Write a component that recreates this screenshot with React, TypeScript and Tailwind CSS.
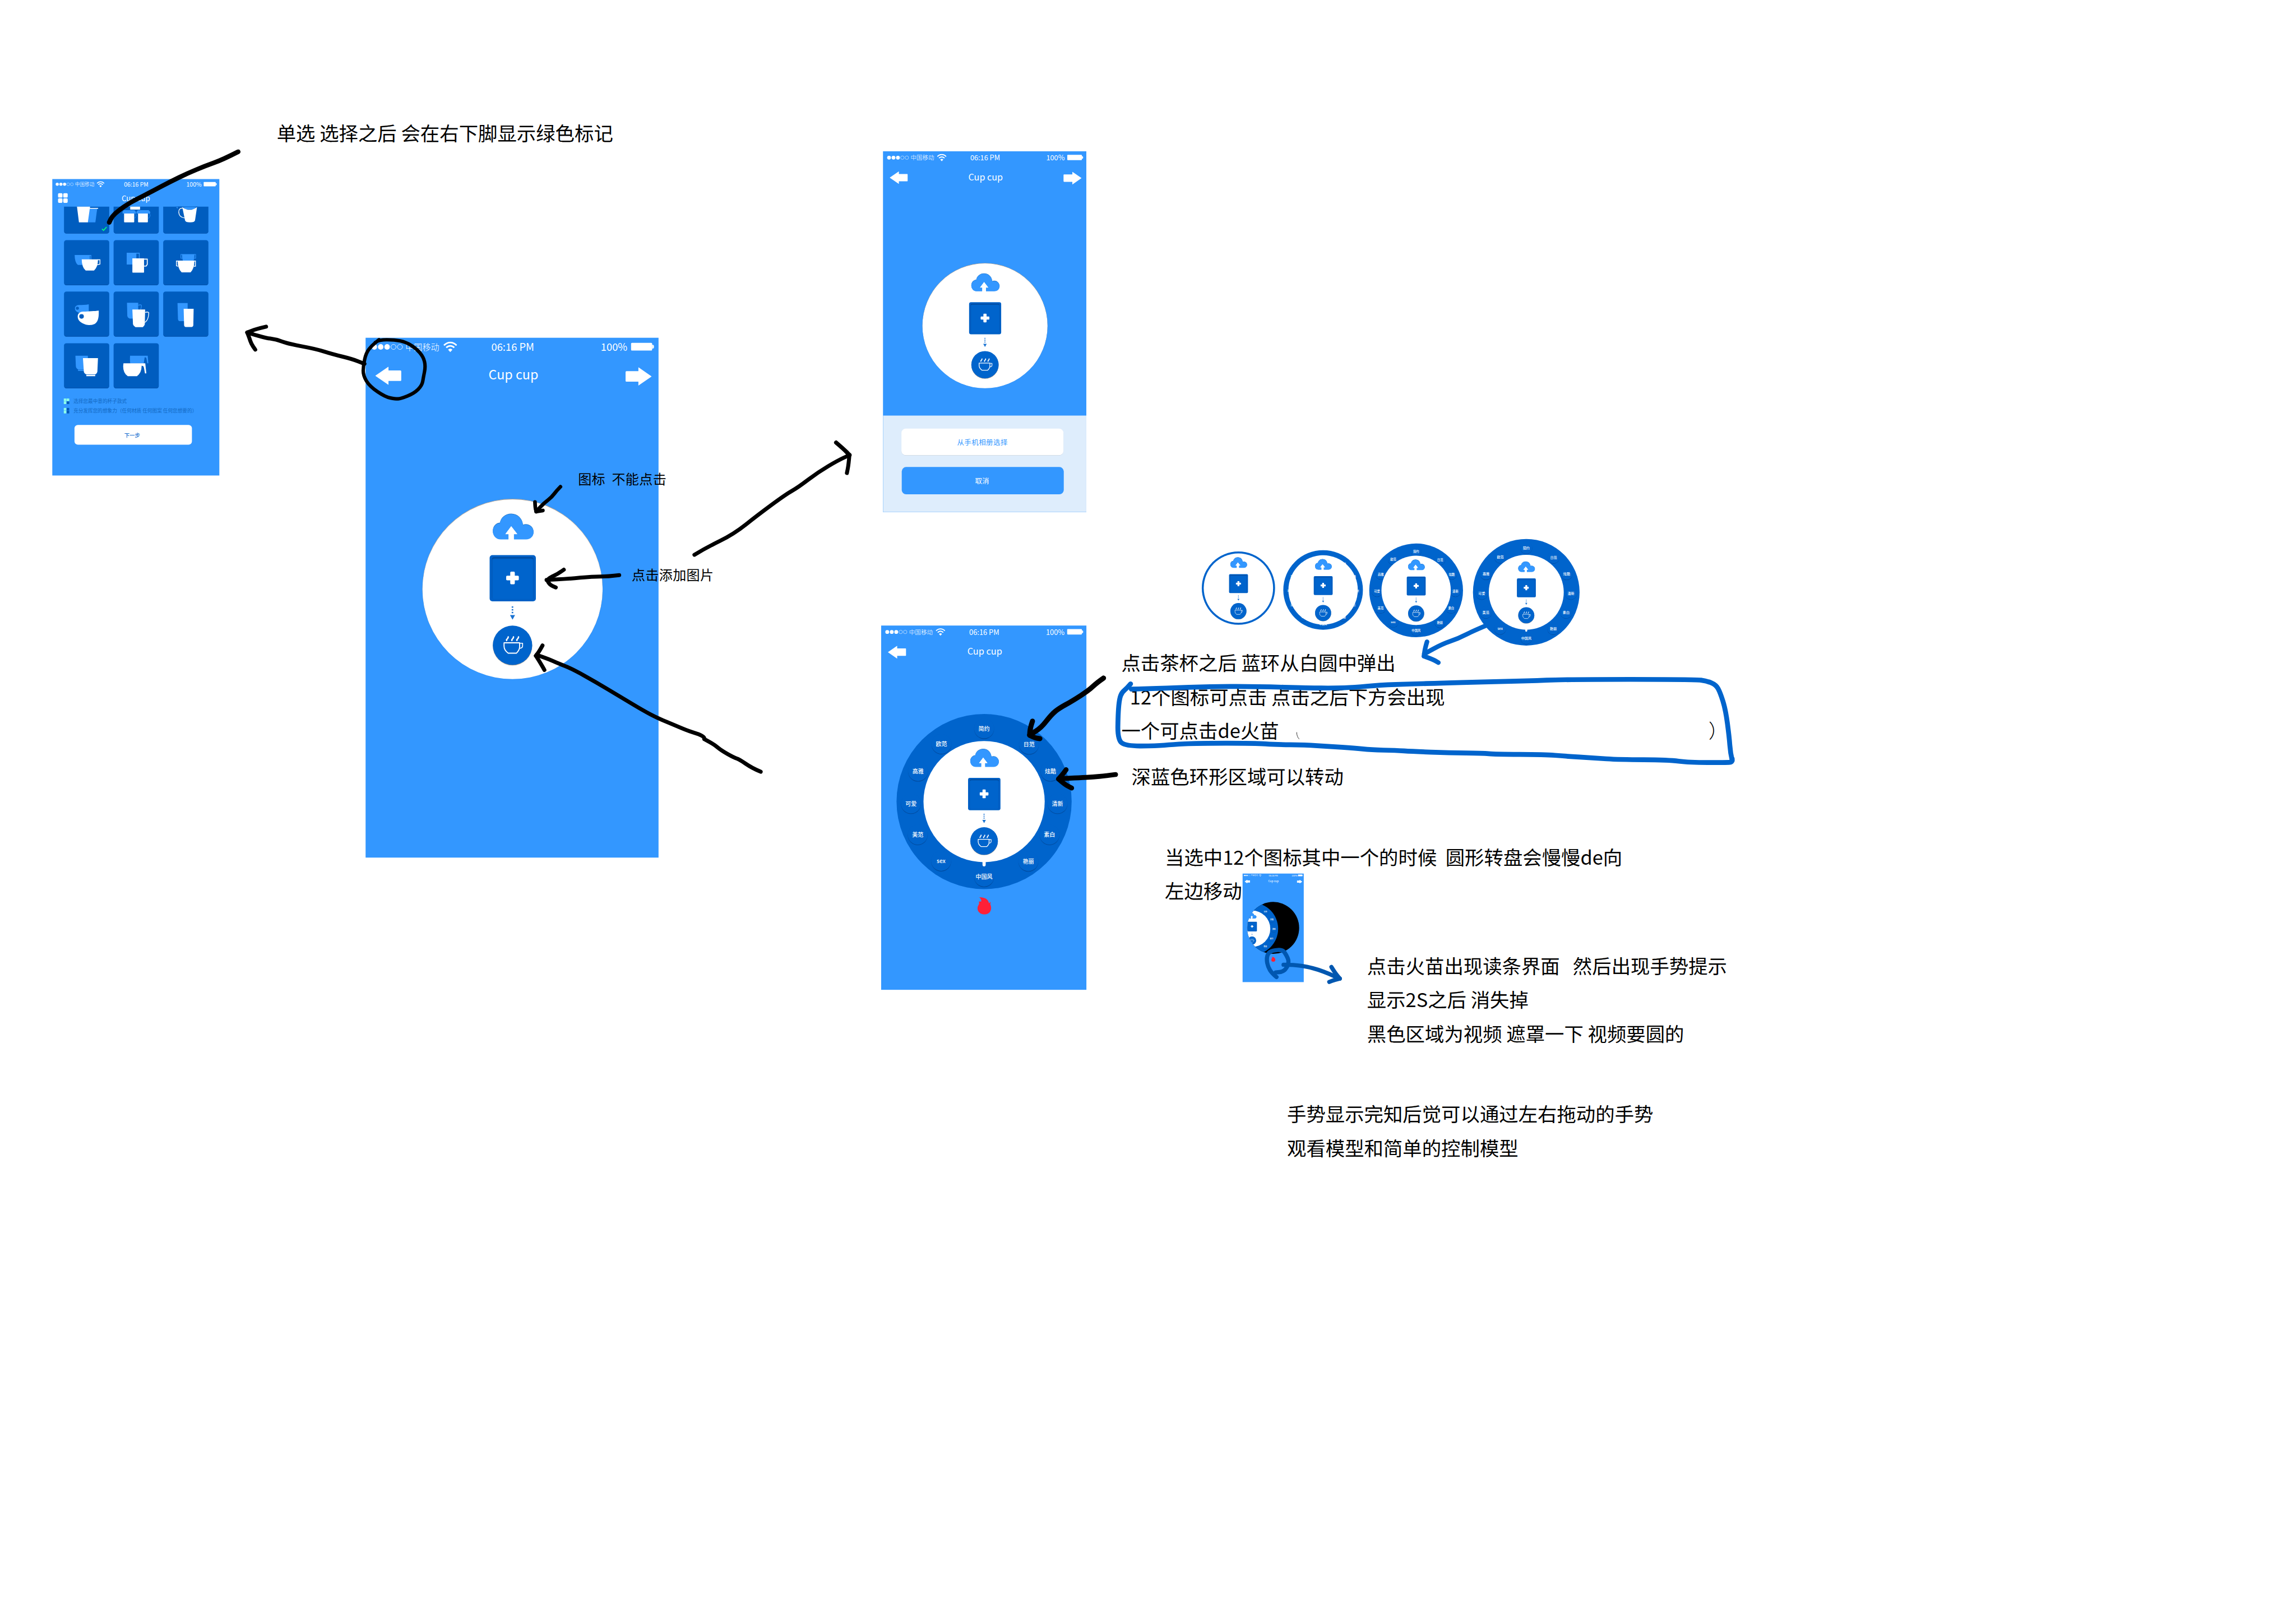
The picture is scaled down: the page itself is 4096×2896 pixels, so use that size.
import React from "react";

type Pt = [number, number];

/* ---------- icons ---------- */

function CloudUpload() {
  const d =
    "M36 115C14 115 0 98 0 78C0 58 14 42 32 41C36 18 56 0 83 0C112 0 134 22 136 50C160 42 184 58 184 82C184 101 170 115 150 115H95V91H111L83 55L56 91H71V115Z";
  return (
    <svg viewBox="0 -2 184 117" className="ml-[3px] h-[57px] w-[89px] shrink-0 overflow-visible">
      <path d={d} fill="#1f6fbe" transform="translate(0 -2)" />
      <path d={d} fill="#3397ff" />
      <path d="M95 116V91H111L83 55L56 91H71V116Z" fill="#fff" />
    </svg>
  );
}

function DashedArrow() {
  return (
    <svg viewBox="0 0 12 29" className="mt-[11px] h-[29px] w-3 shrink-0" fill="#1a73d2">
      <rect x="4.2" y="0" width="3.4" height="3" />
      <rect x="4.2" y="6" width="3.4" height="3" />
      <rect x="4.2" y="12" width="3.4" height="3" />
      <path d="M0.5 19H11.5L6 29Z" />
    </svg>
  );
}

function CupIcon() {
  return (
    <svg viewBox="-21 -20 46 42" className="h-[42px] w-[46px]" fill="none" stroke="#fff" strokeWidth="2.3" strokeLinejoin="round">
      <path d="M-18.5 -4.3H15.5V4C15.5 12 11 16 8.5 18.3H-9.5C-14 15 -18.5 11 -18.5 3Z" />
      <path d="M15.5 -3.5H22V2C22 5.5 20 7.6 15 7.6" strokeWidth="2" />
      <path d="M-10 -18.5C-8 -15.5 -10.5 -14 -12.5 -12C-14 -10.5 -13 -9.5 -12 -8.5M1.5 -18.5C3.500 -15.5 1 -14 -1 -12C-2.500 -10.5 -1.500 -9.500 -0.500 -8.500M12.500 -18.5C14.500 -15.5 12 -14 10 -12C8.500 -10.500 9.500 -9.500 10.500 -8.500" strokeWidth="3" />
    </svg>
  );
}

function Wifi() {
  return (
    <svg viewBox="0 0 30 24" className="h-6 w-[30px]" fill="none" stroke="#fff" strokeWidth="3.4">
      <path d="M1.200 8.600C9 0.200 21 0.200 28.800 8.600" />
      <path d="M6.300 13.600C11.300 8.300 18.700 8.300 23.700 13.600" />
      <path d="M10.300 18.200C13 15.300 17 15.300 19.700 18.200L15 23.400Z" fill="#fff" stroke="none" />
    </svg>
  );
}

function BlockArrow({ flip }: { flip?: boolean }) {
  return (
    <svg viewBox="0 0 57 40" className={flip ? "h-10 w-[57px] translate-y-[1.5px] -scale-x-100" : "h-10 w-[57px]"} fill="#fff">
      <path d="M0 20L29 0V8.500H55Q57 8.500 57 10.500V29.500Q57 31.500 55 31.500H29V40Z" />
    </svg>
  );
}

function Flame({ className }: { className: string }) {
  return (
    <svg viewBox="0 0 91 113" className={className} fill="#ff2037">
      <path d="M12 1C45 0 70 12 75 39L88 32C84 40 82 46 86 52C98 85 78 113 46 113C10 113 -10 80 5 55C10 46 14 38 8 29L25 28C26 16 20 8 12 1Z" />
    </svg>
  );
}

/* ---------- phone chrome ---------- */

function StatusBar() {
  return (
    <div className="grid h-[39px] shrink-0 grid-cols-[1fr_auto_1fr] items-center pr-[10px] pl-[13px] text-white">
      <div className="flex items-center">
        <div className="flex gap-[2px]">
          {[0, 1, 2].map((i) => (
            <span key={i} className="size-3 rounded-full bg-white" />
          ))}
          {[3, 4].map((i) => (
            <span key={i} className="size-3 rounded-full border-[1.300px] border-white" />
          ))}
        </div>
        <span className="ml-[6px] text-[18.500px] leading-none font-light whitespace-nowrap">中国移动</span>
        <span className="ml-[9px]">
          <Wifi />
        </span>
      </div>
      <span className="text-[22.500px] leading-none whitespace-nowrap">06:16 PM</span>
      <div className="flex items-center justify-end">
        <span className="text-[22.500px] leading-none">100%</span>
        <span className="ml-2 h-[17px] w-[46px] rounded-[2px] bg-white" />
        <span className="h-[9px] w-[4px] rounded-r-full bg-white" />
      </div>
    </div>
  );
}

function NavBar({ next }: { next?: boolean }) {
  return (
    <div className="grid h-[87px] shrink-0 grid-cols-[1fr_auto_1fr] items-center pr-[15px] pl-[21px] text-white">
      <BlockArrow />
      <span className="mb-[6px] text-[28.500px] leading-none whitespace-nowrap">Cup cup</span>
      <span className="flex justify-end">{next && <BlockArrow flip />}</span>
    </div>
  );
}

function Phone({ className, children }: { className: string; children: React.ReactNode }) {
  return (
    <section className={"absolute flex h-[1136px] w-[640px] origin-top-left flex-col overflow-hidden bg-[#3397ff] " + className}>
      {children}
    </section>
  );
}

/* ---------- dial ---------- */

function Core({ className }: { className: string }) {
  return (
    <div className={"relative flex flex-col items-center justify-center rounded-full bg-white [grid-area:1/1] " + className}>
      <CloudUpload />
      <div className="mt-[34px] size-[101px] shrink-0 rounded-[6px] bg-[#0060c6] p-[5px]">
        <div className="flex h-full items-center justify-center rounded-[5px] bg-[#0064cc] shadow-[inset_0_2px_2px_rgba(0,50,110,0.7)]">
          <svg viewBox="0 0 28 28" className="size-7" fill="#fff">
            <rect x="9" y="0" width="10" height="28" rx="2.500" />
            <rect x="0" y="9" width="28" height="10" rx="2.500" />
          </svg>
        </div>
      </div>
      <DashedArrow />
      <div className="mt-[13px] flex size-[86px] shrink-0 items-center justify-center rounded-full bg-[#0064cc] pl-1 shadow-[0_1px_1px_rgba(80,50,20,0.5)]">
        <CupIcon />
      </div>
    </div>
  );
}

const STYLES = [
  { name: "简约", at: "left-[273px] top-[45px]" },
  { name: "日范", at: "left-[413px] top-[94px]" },
  { name: "炫酷", at: "left-[480px] top-[178px]" },
  { name: "清新", at: "left-[502px] top-[279px]" },
  { name: "素白", at: "left-[477px] top-[376px]" },
  { name: "艳丽", at: "left-[411px] top-[459px]" },
  { name: "中国风", at: "left-[273px] top-[507px]" },
  { name: "sex", at: "left-[139px] top-[458px]" },
  { name: "美范", at: "left-[66px] top-[376px]" },
  { name: "可爱", at: "left-[45px] top-[279px]" },
  { name: "高雅", at: "left-[67px] top-[178px]" },
  { name: "欧范", at: "left-[140px] top-[93px]" },
];

function Ring({ className = "" }: { className?: string }) {
  return (
    <div className={"relative size-[546px] rounded-full bg-[#0064cc] [grid-area:1/1] " + className}>
      {STYLES.map((s) => (
        <span
          key={s.name}
          className={
            "absolute flex size-[62px] -translate-1/2 items-center justify-center rounded-full bg-[#0064cc] text-[17.500px] leading-none font-medium whitespace-nowrap text-white shadow-[0_2px_1.500px_-0.500px_rgba(0,45,100,0.6)] " +
            s.at
          }
        >
          {s.name}
        </span>
      ))}
      <span className="absolute top-[455px] left-[268px] h-[20px] w-[10px] rounded-b-full bg-white" />
    </div>
  );
}

function Dial({ className, ring, core }: { className: string; ring?: string; core: string }) {
  return (
    <div className={"grid size-[546px] shrink-0 place-items-center " + className}>
      <Ring className={ring} />
      <Core className={core} />
    </div>
  );
}

/* ---------- cup catalogue ---------- */

const B = "#3397ff";
const W = "#fff";
const D = "#005dbf";

const CUPS: React.ReactNode[] = [
  <>
    <path d="M165 131H216L204 221H150Z" fill={B} />
    <path d="M82 100H172L155 221H97Z" fill={W} />
    <path d="M165 127H222V132H165Z" fill={W} />
    <path d="M247 263L257 273L277 251" fill="none" stroke="#00f08a" strokeWidth="7" />
  </>,
  <>
    <path d="M108 100H172V138H108Z" fill={W} />
    <path d="M66 141H136L145 152V163H58V152ZM157 141H228L238 152V163H149V152Z" fill={B} />
    <path d="M68 163H134V217Q134 221 130 221H72Q68 221 68 217ZM159 163H223V217Q223 221 219 221H163Q159 221 159 217Z" fill={W} />
    <path d="M140 163C152 170 148 186 134 197M231 163C243 170 239 186 223 197" fill="none" stroke={B} strokeWidth="3" />
  </>,
  <>
    <path d="M76 112Q94 128 96 144L120 160V112Z" fill={D} />
    <path d="M84 112H230L214 140H130Z" fill={D} />
    <path d="M84 121H96L92 132ZM130 121H214L200 136H145Z" fill={B} />
    <path d="M124 121Q172 157 220 121L207 208Q204 221 175 221Q145 221 142 208Z" fill={W} />
    <path d="M130 129C108 124 100 140 101 155C103 178 118 190 138 192" fill="none" stroke={W} strokeWidth="5" />
  </>,
  <>
    <path d="M69 97H168V162H90Q70 148 69 97Z" fill={B} />
    <path d="M160 99H175V132H162" fill="none" stroke={B} strokeWidth="5" />
    <path d="M115 125H221Q221 175 195 198H141Q116 178 115 125Z" fill={W} />
    <path d="M218 128H234V156L212 162" fill="none" stroke={W} strokeWidth="5" />
  </>,
  <>
    <path d="M85 82H148V159H85Z" fill={B} />
    <path d="M146 85H167V118" fill="none" stroke={B} strokeWidth="5" />
    <path d="M122 119H198V209Q198 212 195 212H125Q122 212 122 209Z" fill={W} />
    <path d="M196 124H219V158L212 169H196" fill="none" stroke={W} strokeWidth="6" />
  </>,
  <>
    <path d="M122 91H204Q204 120 196 140H130Q122 120 122 91Z" fill={B} />
    <path d="M124 93H115V118H124M202 93H211V118H202" fill="none" stroke={B} strokeWidth="4" />
    <path d="M94 133H203Q203 185 178 210H120Q94 185 94 133Z" fill={W} />
    <path d="M97 136H86V167L97 170M200 136H210V170L198 170" fill="none" stroke={W} strokeWidth="5" />
  </>,
  <>
    <path d="M161 83C140 87 118 87 98 88C80 89 71 98 71 110C71 122 80 133 95 138L161 138Z" fill={B} />
    <circle cx="87" cy="109" r="10" fill={D} />
    <path d="M226 124C200 128 160 128 125 131C100 132 89 146 89 164C89 195 130 218 168 218C205 218 226 200 226 140Z" fill={W} />
    <circle cx="114" cy="162" r="15" fill={D} />
  </>,
  <>
    <path d="M87 73H160V176H105Q90 170 89 158Z" fill={B} />
    <path d="M160 90Q180 82 181 92Q180 108 176 116" fill="none" stroke={B} strokeWidth="4" />
    <path d="M122 117H205L203 213Q201 223 190 232H142Q128 223 126 213Z" fill={W} />
    <path d="M205 136Q224 130 229 138Q228 185 203 202" fill="none" stroke={W} strokeWidth="5" />
  </>,
  <>
    <path d="M93 75H159V193H105Q97 190 96 180Z" fill={B} />
    <path d="M133 112H198L196 220Q195 229 186 231H145Q137 229 136 220Z" fill={W} />
  </>,
  <>
    <path d="M74 82H155V170H91Q78 164 77 150ZM91 172H130V180H91Z" fill={B} />
    <path d="M123 97H221L217 186Q216 196 204 203H144Q130 196 129 186ZM145 206H203V215H145Z" fill={W} />
  </>,
  <>
    <path d="M107 82H222L226 131H219L213 97Q210 92 202 92L196 132H108Q105 110 107 82Z" fill={B} />
    <path d="M64 131H206L213 197H204L197 158Q194 146 182 146Q184 190 152 215H92Q62 195 62 150Z" fill={W} />
  </>,
];

function CupCard({ art }: { art: React.ReactNode }) {
  return (
    <div className="size-[173px] rounded-[9px] bg-[#005dbf] shadow-[inset_0_-2px_1px_rgba(0,50,120,0.3)]">
      <svg viewBox="0 0 294 294" className="size-full">
        {art}
      </svg>
    </div>
  );
}

function Legend({ second, text }: { second: string; text: string }) {
  return (
    <li className="flex h-[35.500px] items-center">
      <span className="grid size-[21px] grid-cols-2 gap-px">
        <i className="bg-[#8fffe8]" />
        <i className={second} />
        <i className="bg-[#8fffe8]" />
        <i className="bg-[#0058b8]" />
      </span>
      <span className="ml-4 text-[18.600px] leading-none whitespace-nowrap text-[#1269c4]">{text}</span>
    </li>
  );
}

function CatalogPhone({ className }: { className: string }) {
  return (
    <Phone className={className}>
      <StatusBar />
      <div className="grid h-[67px] shrink-0 grid-cols-[1fr_auto_1fr] items-center px-[22px] text-white">
        <span className="grid size-[37px] grid-cols-2 gap-[3px]">
          {[0, 1, 2, 3].map((i) => (
            <i key={i} className="rounded-[4px] bg-white" />
          ))}
        </span>
        <span className="text-[28.500px] leading-none">Cup cup</span>
        <span />
      </div>
      <div className="flex h-[696px] shrink-0 flex-col justify-end overflow-hidden">
        <div className="ml-[45px] grid w-fit grid-cols-3 gap-x-[17px] gap-y-[24.700px]">
          {CUPS.map((art, i) => (
            <CupCard key={i} art={art} />
          ))}
        </div>
      </div>
      <ul className="mt-[32px] ml-[44px]">
        <Legend second="bg-[#8fffe8]" text="选择您最中意的杯子款式" />
        <Legend second="bg-[#0058b8]" text="充分发挥您的想象力（任何材质 任何图案 任何您想要的）" />
      </ul>
      <div className="mt-[37px] ml-[85px] flex h-[76px] w-[450px] items-center justify-center rounded-[13px] bg-white pr-2 text-[20px] font-medium text-[#1a6fcf]">
        下一步
      </div>
    </Phone>
  );
}

/* ---------- notes and ink ---------- */

function Note({ className, children }: { className: string; children: React.ReactNode }) {
  return <p className={"absolute whitespace-pre text-black " + className}>{children}</p>;
}

const BIG = "text-[41.670px] leading-[72.900px] ";
const SMALL = "text-[29.170px] leading-[40px] tracking-[0.400px] ";

function smooth(p: Pt[]): string {
  let d = `M${p[0][0]} ${p[0][1]}`;
  for (let i = 1; i < p.length - 1; i++) {
    const mx = (p[i][0] + p[i + 1][0]) / 2;
    const my = (p[i][1] + p[i + 1][1]) / 2;
    d += `Q${p[i][0]} ${p[i][1]} ${mx} ${my}`;
  }
  const last = p[p.length - 1];
  return d + `L${last[0]} ${last[1]}`;
}

const BLACK = "#000";
const BLUE = "#0064cc";
const NAVY = "#0057b0";

const INK: { c: string; w: number; p: Pt[] }[] = [
  { c: BLACK, w: 10, p: [[514.7, 328], [481.5, 345], [442, 359.3], [406.3, 374], [366.8, 393.3], [335, 410], [311.4, 422.7], [279.8, 438.3], [256, 455], [242, 468], [236, 480.7]] },
  { c: BLACK, w: 8.5, p: [[575, 706], [553.4, 711], [534.3, 718.7]] },
  { c: BLACK, w: 8.5, p: [[534.3, 718.7], [538.6, 730], [543, 743], [551.6, 755.7]] },
  { c: BLACK, w: 8.5, p: [[534.3, 718.7], [570.7, 730], [596.7, 733.4], [622.8, 743], [683.5, 754.4], [718, 765.3], [761.5, 776], [787.6, 786.3]] },
  { c: BLACK, w: 7.5, p: [[811, 740], [819, 734.3], [852.6, 734.3], [877, 739.3], [899.5, 753.3], [915, 771.7], [919.6, 791.7], [915, 815], [912, 833], [895, 850], [866, 861.7], [855, 862.3], [832.5, 858], [799, 835], [784.7, 811.7], [785, 790], [791, 763], [803.5, 746.7], [819, 734.3]] },
  { c: BLACK, w: 8, p: [[1211, 1052], [1203, 1060], [1191.9, 1075], [1176, 1086.7], [1158.4, 1105.7]] },
  { c: BLACK, w: 8, p: [[1156, 1085], [1156.5, 1098], [1159, 1105.7]] },
  { c: BLACK, w: 8, p: [[1159, 1105.7], [1173, 1103.3]] },
  { c: BLACK, w: 8.5, p: [[1338, 1243], [1313.7, 1246], [1280.5, 1246], [1227, 1251.2], [1181, 1253.3]] },
  { c: BLACK, w: 8.5, p: [[1218.3, 1231.2], [1206.5, 1239.8], [1188.7, 1248], [1182, 1254], [1188.7, 1264.3], [1201, 1269.6]] },
  { c: BLACK, w: 8.5, p: [[1643.8, 1668], [1624.9, 1660], [1596.8, 1640.6], [1586.6, 1637.8], [1558.6, 1622], [1543, 1609], [1522, 1597.5]] },
  { c: BLACK, w: 8.5, p: [[1521.8, 1597], [1522.9, 1591], [1487, 1579.8], [1461.6, 1569], [1420.8, 1552], [1390, 1535.7], [1339, 1505], [1288, 1474.5], [1237, 1446], [1206.5, 1433.7], [1186, 1424.7], [1159.6, 1415.3]] },
  { c: BLACK, w: 8.5, p: [[1172.3, 1395], [1165.7, 1407], [1158, 1417.3]] },
  { c: BLACK, w: 8.5, p: [[1158, 1417.3], [1168.3, 1433.7], [1176.4, 1448]] },
  { c: BLACK, w: 8.5, p: [[1500.5, 1199], [1524.8, 1184.3], [1585.5, 1154.3], [1637.6, 1112.9], [1698.3, 1068.2], [1724.3, 1053.5], [1767.7, 1020.4], [1811, 994.9], [1836, 983.4]] },
  { c: BLACK, w: 9, p: [[1806.7, 956.6], [1824, 971.3], [1835.4, 983.4]] },
  { c: BLACK, w: 8.5, p: [[1835.4, 983.4], [1833.6, 1004.4], [1830, 1022.3]] },
  { c: BLACK, w: 11, p: [[2384.5, 1465.5], [2369.8, 1475.6], [2353.5, 1491.5], [2316.7, 1515.3], [2288, 1531.2], [2271.8, 1544.4], [2249.4, 1573.5], [2225, 1588.3]] },
  { c: BLACK, w: 11, p: [[2231, 1558.7], [2226, 1573.5], [2225, 1589]] },
  { c: BLACK, w: 11, p: [[2225, 1589], [2235, 1594.7], [2247, 1596.3]] },
  { c: BLACK, w: 10.5, p: [[2410.6, 1674], [2390, 1676.7], [2361.6, 1679.4], [2333, 1681], [2288, 1683]] },
  { c: BLACK, w: 10.5, p: [[2303.7, 1663.5], [2296, 1674], [2287.3, 1683.6]] },
  { c: BLACK, w: 10.5, p: [[2287.3, 1683.6], [2300.4, 1695.3], [2315.7, 1703.2]] },
  { c: BLUE, w: 10, p: [[3211.6, 1351.7], [3180, 1365], [3151.3, 1380], [3116.8, 1391.7], [3077.5, 1413.3]] },
  { c: BLUE, w: 10, p: [[3083.5, 1387], [3079.5, 1400], [3077, 1418.3]] },
  { c: BLUE, w: 10, p: [[3077, 1418.3], [3093.9, 1424], [3108, 1432]] },
  { c: BLUE, w: 10.5, p: [[2443, 1478], [2435.7, 1486.7], [2424, 1496.7], [2419, 1510], [2416, 1540], [2415, 1599], [2433, 1612.3], [2498, 1612.3], [2534, 1609], [2587.5, 1606.3], [2712.5, 1606.3], [2757, 1609.3], [2819.6, 1610], [2873, 1613.3], [2926.8, 1616.7], [2962.5, 1620.7], [3016, 1621.7], [3051.8, 1624], [3132, 1627.3], [3203.6, 1627.7], [3230, 1630.3], [3337.5, 1630.7], [3382, 1634.3], [3444.6, 1638.3], [3498, 1641.7], [3605, 1642.3], [3650, 1648], [3730.4, 1648], [3742, 1647.5], [3743, 1640]] },
  { c: BLUE, w: 10.5, p: [[3743, 1644], [3739, 1626.7], [3736.6, 1593.3], [3728.6, 1533.3], [3717, 1496.7], [3708, 1480], [3688, 1471.7], [3663, 1468.3], [3382, 1468.3], [3302, 1471.7], [3203.6, 1473.7], [3114, 1476.7], [3051.8, 1478], [2980, 1480.7], [2926.8, 1485.7], [2882, 1487.3], [2828.6, 1486.7], [2721, 1484], [2623, 1483.3], [2516, 1487.7], [2444.6, 1489.3]] },
  { c: NAVY, w: 9, p: [[2758.3, 2111.7], [2748.3, 2103.3], [2740, 2090], [2736.7, 2073.3], [2740, 2060], [2750, 2054], [2771.7, 2052.3], [2780, 2065], [2785, 2076.7], [2781.7, 2090], [2773, 2100], [2756.7, 2101.7]] },
  { c: NAVY, w: 9, p: [[2773.5, 2085], [2796.7, 2085], [2826.7, 2090], [2846.7, 2095], [2873, 2105], [2895, 2115]] },
  { c: NAVY, w: 9, p: [[2877, 2090], [2885, 2103], [2895, 2115]] },
  { c: NAVY, w: 9, p: [[2895, 2115], [2883, 2118], [2872.3, 2122.3]] },
];

function Ink() {
  return (
    <svg viewBox="0 0 4961 3508" className="pointer-events-none absolute inset-0 h-full w-full" fill="none" strokeLinecap="round" strokeLinejoin="round">
      {INK.map((s, i) => (
        <path key={i} d={smooth(s.p)} stroke={s.c} strokeWidth={s.w} />
      ))}
      <path d="M2802 1583Q2802 1592 2807 1597" stroke="#333" strokeWidth="1.200" />
    </svg>
  );
}

/* ---------- board ---------- */

export default function App() {
  return (
    <main className="h-[2896px] w-[4096px] overflow-hidden bg-white">
      <div className="relative h-[3508px] w-[4961px] origin-top-left scale-[0.8256] bg-white font-['Noto_Sans_CJK_SC','Noto_Sans',sans-serif]">
        <CatalogPhone className="top-[387px] left-[113px] scale-[0.564]" />

        <Phone className="top-[730px] left-[790px] scale-[0.989]">
          <StatusBar />
          <NavBar next />
          <Core className="mt-[226px] ml-[124px] size-[394px] shrink-0 shadow-[inset_0_1px_1px_rgba(70,50,30,0.55),0_0_1px_#1a80f0]" />
        </Phone>

        <Phone className="top-[327px] left-[1908px] scale-[0.6865]">
          <StatusBar />
          <NavBar next />
          <Core className="mt-[226px] ml-[124px] size-[394px] shrink-0 shadow-[inset_0_1px_1px_rgba(70,50,30,0.55),0_0_1px_#1a80f0]" />
          <div className="mt-auto flex h-[304px] shrink-0 flex-col bg-[#deedfc] pt-[41px] pl-[58px]">
            <div className="flex h-[84px] w-[510px] items-center justify-center rounded-[14px] bg-white text-[22px] tracking-[0.800px] text-[#3397ff] shadow-[0_1px_1px_rgba(0,0,0,0.12)]">
              从手机相册选择
            </div>
            <div className="mt-[37px] ml-px flex h-[86px] w-[510px] items-center justify-center rounded-[14px] bg-[#3397ff] pr-1 text-[22px] text-white">取消</div>
          </div>
        </Phone>

        <Phone className="top-[1352px] left-[1904px] scale-[0.693]">
          <StatusBar />
          <NavBar />
          <Dial className="mt-[150px] ml-[48px]" core="size-[378px]" />
          <Flame className="mt-[25px] ml-[300px] h-[54px] w-[44px] shrink-0" />
        </Phone>

        <Dial className="absolute top-[998px] left-[2403px]" ring="scale-[0.290]" core="size-[370px] scale-[0.405]" />
        <Dial className="absolute top-[1002px] left-[2586px]" ring="scale-[0.315]" core="size-[370px] scale-[0.405]" />
        <Dial className="absolute top-[1003px] left-[2787px]" ring="scale-[0.371]" core="size-[370px] scale-[0.405]" />
        <Dial className="absolute top-[1007px] left-[3025px]" ring="scale-[0.422]" core="size-[400px] scale-[0.405]" />

        <Note className={BIG + "top-[250px] left-[598px]"}>单选 选择之后 会在右下脚显示绿色标记</Note>
        <Note className={SMALL + "top-[1014px] left-[1249px]"}>图标  不能点击</Note>
        <Note className={SMALL + "top-[1221px] left-[1365px]"}>点击添加图片</Note>
        <Note className={BIG + "top-[1395px] left-[2423px]"}>{"点击茶杯之后 蓝环从白圆中弹出\n  12个图标可点击 点击之后下方会出现\n一个可点击de火苗"}</Note>
        <Note className={BIG + "top-[1541px] left-[3692px] font-light"}>）</Note>
        <Note className={BIG + "top-[1641px] left-[2445px]"}>深蓝色环形区域可以转动</Note>
        <Note className={BIG + "top-[1815px] left-[2517px]"}>{"当选中12个图标其中一个的时候  圆形转盘会慢慢de向\n左边移动"}</Note>
        <Note className={BIG + "top-[2050px] left-[2954px]"}>{"点击火苗出现读条界面   然后出现手势提示\n显示2S之后 消失掉\n黑色区域为视频 遮罩一下 视频要圆的"}</Note>
        <Note className={BIG + "top-[2370px] left-[2781px]"}>{"手势显示完知后觉可以通过左右拖动的手势\n观看模型和简单的控制模型"}</Note>

        <Phone className="top-[1888px] left-[2685px] scale-[0.2065]">
          <StatusBar />
          <NavBar next />
          <div className="mt-[171px] ml-[48px] size-[544px] shrink-0 overflow-hidden rounded-full bg-black">
            <Dial className="mt-[8px] -ml-[222px]" core="size-[382px]" />
          </div>
          <Flame className="mt-[29px] ml-[300px] h-[54px] w-[44px] shrink-0" />
        </Phone>

        <Ink />
      </div>
    </main>
  );
}
